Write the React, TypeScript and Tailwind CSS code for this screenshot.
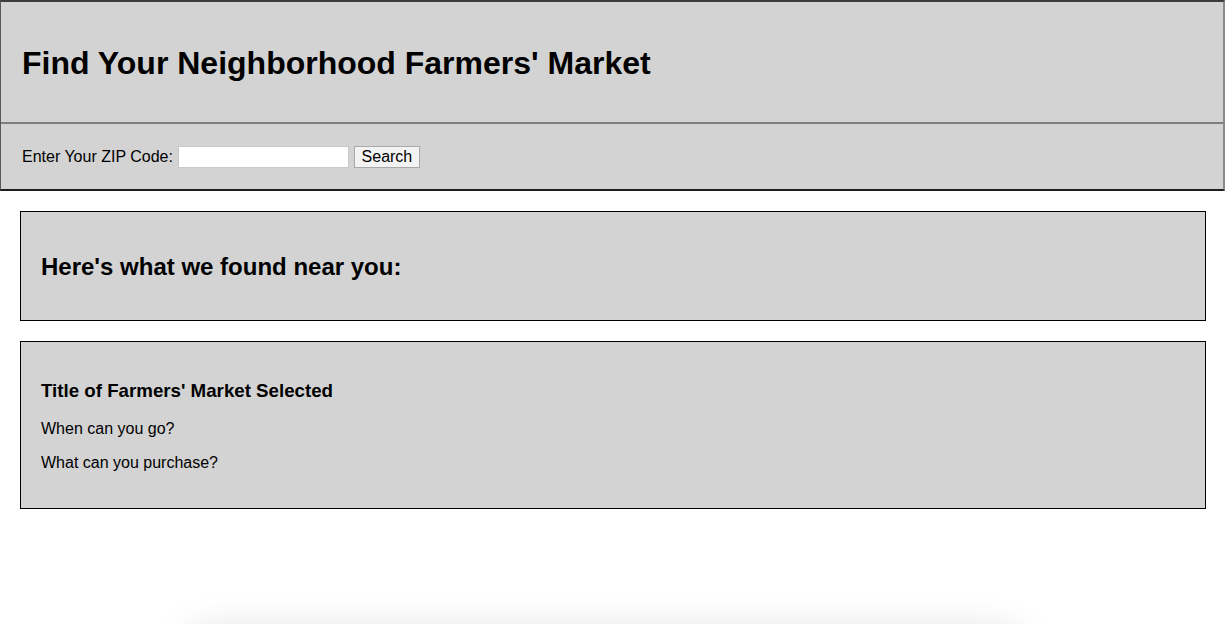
import React from "react";

export default function App() {
  return (
    <div
      className="flex flex-col bg-white min-h-[624px] text-black"
      style={{ fontFamily: '"Liberation Sans", Arial, Helvetica, sans-serif' }}
    >
      <header className="flex flex-col bg-[#d3d3d3] border-t-2 border-t-[#3c3c3c] border-l border-l-[#5a5a5a] border-r-2 border-r-[#8a8a8a] border-b-2 border-b-[#1e1e1e]">
        <div className="pt-[43px] pb-[40px] pl-[21px] border-b-2 border-b-[#7f7f7f]">
          <h1 className="text-[32px] leading-[37px] font-bold">Find Your Neighborhood Farmers' Market</h1>
        </div>
        <div className="flex items-center pt-[22px] pb-[21px] pl-[21px] text-[16px]">
          <label className="leading-[22px]">Enter Your ZIP Code:</label>
          <input
            type="text"
            className="ml-[5px] w-[171px] h-[22px] bg-white border border-[#c8c8c8] outline-none px-1"
          />
          <button className="ml-[5px] w-[66px] h-[22px] bg-[#f3f3f3] border border-[#a9a9a9] text-[16px] leading-[20px]">
            Search
          </button>
        </div>
      </header>

      <section className="mt-[20px] ml-[20px] mr-[19px] bg-[#d3d3d3] border border-black pl-[20px] pt-[41px] pb-[39px]">
        <h2 className="text-[24px] leading-[28px] font-bold">Here's what we found near you:</h2>
      </section>

      <section className="mt-[20px] ml-[20px] mr-[19px] bg-[#d3d3d3] border border-black pl-[20px] pt-[38px] pb-[36px] flex flex-col">
        <h3 className="text-[18.72px] leading-[22px] font-bold">Title of Farmers' Market Selected</h3>
        <p className="mt-[18px] text-[16px] leading-[18px]">When can you go?</p>
        <p className="mt-[16px] text-[16px] leading-[18px]">What can you purchase?</p>
      </section>

      <div className="mt-[127px] ml-[190px] w-[825px] h-[100px] bg-white shadow-[0_0_40px_rgba(0,0,0,0.18)]"></div>
    </div>
  );
}
